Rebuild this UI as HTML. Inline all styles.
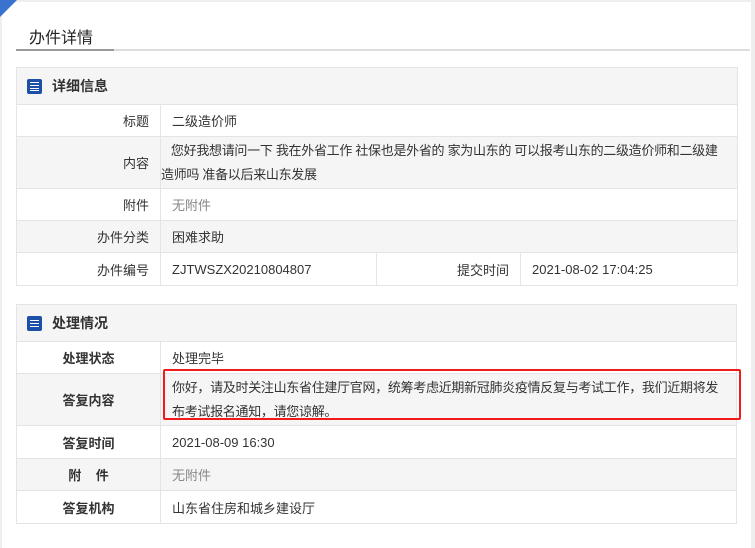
<!DOCTYPE html>
<html><head><meta charset="utf-8"><style>
*{margin:0;padding:0;box-sizing:border-box}
body{width:755px;height:548px;background:#eee;font-family:"Liberation Sans","Noto Sans CJK SC",sans-serif;font-size:13px;color:#333;position:relative;overflow:hidden}
.panel{position:absolute;left:2px;top:2px;width:749px;height:546px;background:#fff}
.tri{position:absolute;left:0;top:0;width:0;height:0;border-top:17px solid #3a72d0;border-right:17px solid transparent}
.title{position:absolute;left:29px;top:24px;font-size:16px;color:#222}
.ul1{position:absolute;left:16px;top:49px;width:734px;height:2px;background:#ddd}
.ul2{position:absolute;left:16px;top:49px;width:98px;height:2px;background:#999}
table{position:absolute;left:16px;width:721px;border-collapse:collapse;table-layout:fixed}
td{border:1px solid #e4e4e4;padding:0 11px;vertical-align:middle}
.h td{background:#f5f5f5;height:37px;font-weight:bold;font-size:14px;padding-left:10px}
.g td{background:#f5f5f5}
.l{text-align:right;width:144px}
.b .l{text-align:center;font-weight:bold}
.gr{color:#888}
.tight{letter-spacing:-0.3px;padding-right:0;white-space:nowrap;overflow:hidden}
.icon{display:inline-block;width:15px;height:15px;background:#1b4fa8;border-radius:2px;vertical-align:-3px;margin-right:10px;position:relative}
.icon i{position:absolute;left:3px;right:3px;height:1px;background:#fff}
.red{position:absolute;left:163px;top:369px;width:578px;height:51px;border:2px solid #f01c1c;border-radius:2px}
</style></head><body>
<div class="panel"></div>
<div class="tri"></div>
<div class="title">办件详情</div>
<div class="ul1"></div><div class="ul2"></div>

<table style="top:67px">
<colgroup><col style="width:144px"><col style="width:216px"><col style="width:144px"><col style="width:217px"></colgroup>
<tr class="h"><td colspan="4"><span class="icon"><i style="top:3px"></i><i style="top:6px"></i><i style="top:9px"></i><i style="top:11px"></i></span>详细信息</td></tr>
<tr style="height:32px"><td class="l">标题</td><td colspan="3">二级造价师</td></tr>
<tr class="g" style="height:52px"><td class="l">内容</td><td colspan="3" class="tight" style="line-height:24px;padding-left:0">&nbsp;&nbsp;&nbsp;您好我想请问一下 我在外省工作 社保也是外省的 家为山东的 可以报考山东的二级造价师和二级建<br>造师吗 准备以后来山东发展</td></tr>
<tr style="height:32px"><td class="l">附件</td><td colspan="3" class="gr">无附件</td></tr>
<tr class="g" style="height:32px"><td class="l">办件分类</td><td colspan="3">困难求助</td></tr>
<tr style="height:33px"><td class="l">办件编号</td><td>ZJTWSZX20210804807</td><td class="l">提交时间</td><td>2021-08-02 17:04:25</td></tr>
</table>

<table class="b" style="top:304px">
<colgroup><col style="width:144px"><col></colgroup>
<tr class="h"><td colspan="2"><span class="icon"><i style="top:4px"></i><i style="top:7px"></i><i style="top:10px"></i></span>处理情况</td></tr>
<tr style="height:32px"><td class="l">处理状态</td><td>处理完毕</td></tr>
<tr class="g" style="height:52px"><td class="l">答复内容</td><td class="tight" style="line-height:24px">你好，请及时关注山东省住建厅官网，统筹考虑近期新冠肺炎疫情反复与考试工作，我们近期将发<br>布考试报名通知，请您谅解。</td></tr>
<tr style="height:33px"><td class="l">答复时间</td><td>2021-08-09 16:30</td></tr>
<tr class="g" style="height:32px"><td class="l">附&nbsp;&nbsp;&nbsp;&nbsp;件</td><td class="gr">无附件</td></tr>
<tr style="height:33px"><td class="l">答复机构</td><td>山东省住房和城乡建设厅</td></tr>
</table>
<div class="red"></div>
</body></html>
